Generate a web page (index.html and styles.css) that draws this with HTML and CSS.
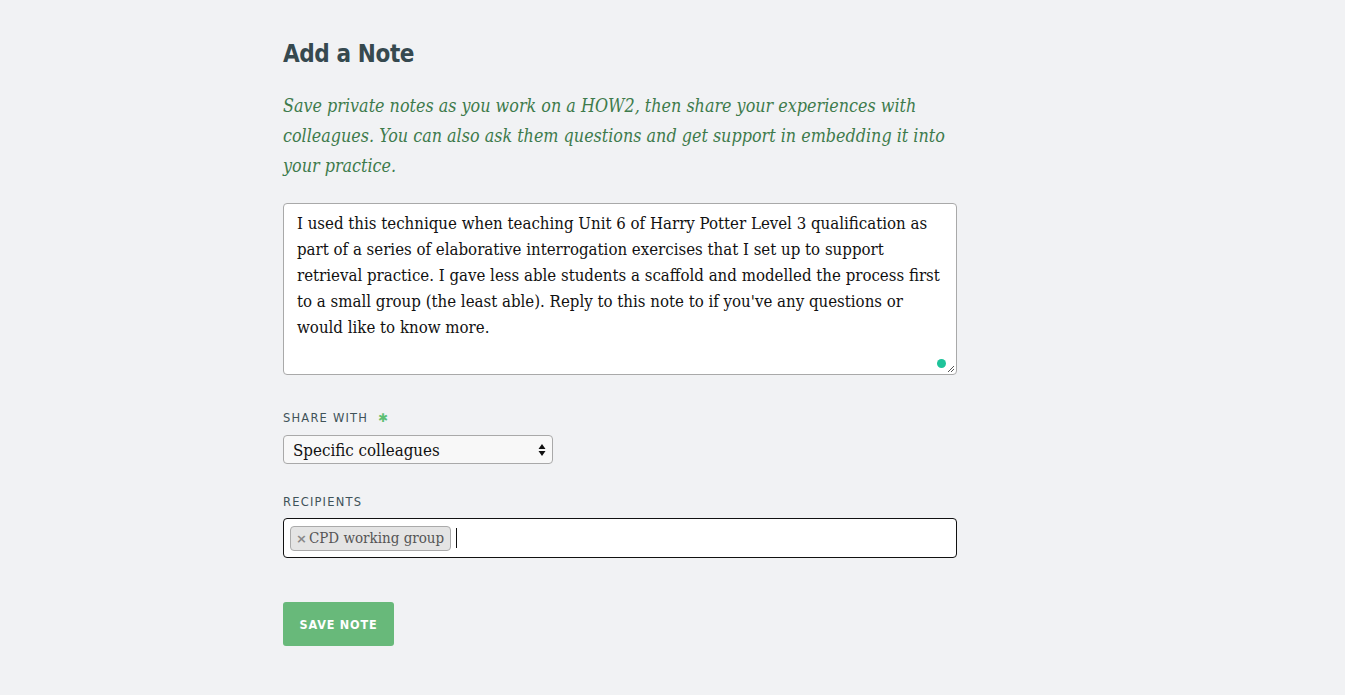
FILE: index.html
```html
<!DOCTYPE html>
<html>
<head>
<meta charset="utf-8">
<link rel="stylesheet" href="styles.css">
</head>
<body>
<main class="page">
  <h1 class="title">Add a Note</h1>
  <p class="intro">Save private notes as you work on a HOW2, then share your experiences with colleagues. You can also ask them questions and get support in embedding it into your practice.</p>
  <div class="textarea-wrap">
    <div class="textarea">I used this technique when teaching Unit 6 of Harry Potter Level 3 qualification as part of a series of elaborative interrogation exercises that I set up to support retrieval practice. I gave less able students a scaffold and modelled the process first to a small group (the least able). Reply to this note to if you've any questions or would like to know more.</div>
    <span class="dot"></span>
    <svg class="grip" width="8" height="8" viewBox="0 0 8 8"><path d="M7 1 L1 7 M7 4 L4 7" stroke="#555" stroke-width="1"/></svg>
  </div>
  <label class="label">SHARE WITH <span class="req">✱</span></label>
  <div class="select">
    <span>Specific colleagues</span>
    <svg width="8" height="14" viewBox="0 0 8 14"><path d="M4 1 L7.5 6 H0.5 Z M4 13 L7.5 8 H0.5 Z" fill="#111"/></svg>
  </div>
  <label class="label label-2">RECIPIENTS</label>
  <div class="tags">
    <span class="tag"><span class="x">×</span>CPD working group</span>
    <span class="caret"></span>
  </div>
  <button class="btn">SAVE NOTE</button>
</main>
</body>
</html>
```
FILE: styles.css
```css
html, body { margin: 0; padding: 0; background: #f1f2f4; }
body { font-family: "DejaVu Serif Condensed", "DejaVu Serif", serif; }
.page { width: 674px; margin-left: 283px; padding-top: 38px; display: flex; flex-direction: column; align-items: flex-start; }
.title { font-family: "DejaVu Sans Condensed", "DejaVu Sans", sans-serif; font-weight: bold; font-size: 24px; letter-spacing: -0.4px; color: #36494f; margin: 0; line-height: 32px; }
.intro { font-style: italic; color: #3e7b4c; font-size: 17.8px; line-height: 30px; margin: 21px 0 0 0; }
.textarea-wrap { position: relative; width: 674px; margin-top: 22px; }
.textarea { box-sizing: border-box; width: 674px; height: 172px; background: #fff; border: 1px solid #a9a9a9; border-radius: 4px; padding: 6px 8px 6px 13px; font-size: 16.7px; line-height: 26px; color: #111; }
.dot { position: absolute; right: 11px; bottom: 7px; width: 9px; height: 9px; border-radius: 50%; background: #1ec39a; }
.grip { position: absolute; right: 2px; bottom: 2px; }
.label { font-family: "DejaVu Sans", sans-serif; font-size: 11.5px; letter-spacing: 1.2px; color: #3f5359; margin-top: 36px; line-height: 14px; }
.req { color: #5cbf73; font-size: 12px; margin-left: 5px; }
.label-2 { margin-top: 31px; }
.select { box-sizing: border-box; width: 270px; height: 29px; margin-top: 10px; background: #f8f8f8; border: 1px solid #a9a9a9; border-radius: 4px; display: flex; align-items: center; justify-content: space-between; padding: 0 6px 0 9px; font-size: 16.8px; color: #111; }
.tags { box-sizing: border-box; width: 674px; height: 40px; margin-top: 9px; background: #fff; border: 1px solid #111; border-radius: 4px; display: flex; align-items: center; padding: 0 6px; gap: 5px; }
.tag { box-sizing: border-box; height: 25px; background: #e4e4e4; border: 1px solid #aaa; border-radius: 4px; display: flex; align-items: center; padding: 0 6px 0 5px; font-size: 15px; color: #555; }
.x { font-family: "DejaVu Sans", sans-serif; font-size: 13px; font-weight: bold; color: #888; margin-right: 2px; }
.caret { width: 1px; height: 20px; background: #111; }
.btn { margin-top: 44px; width: 111px; height: 44px; background: #68b97a; border: none; border-radius: 3px; color: #fff; font-family: "DejaVu Sans Condensed", "DejaVu Sans", sans-serif; font-weight: bold; font-size: 12.5px; letter-spacing: 0.8px; padding: 0; }
```
